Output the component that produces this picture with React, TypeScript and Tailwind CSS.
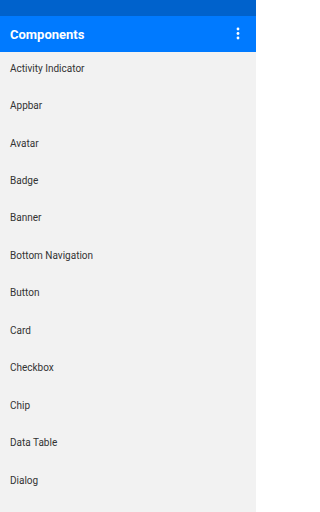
const items = [
  "Activity Indicator",
  "Appbar",
  "Avatar",
  "Badge",
  "Banner",
  "Bottom Navigation",
  "Button",
  "Card",
  "Checkbox",
  "Chip",
  "Data Table",
  "Dialog",
];

function MoreIcon() {
  return (
    <svg width="6" height="14" viewBox="0 0 6 14" fill="white">
      <circle cx="3" cy="2" r="1.4" />
      <circle cx="3" cy="6.5" r="1.4" />
      <circle cx="3" cy="11" r="1.4" />
    </svg>
  );
}

export default function App() {
  return (
    <div className="flex h-[512px] w-[256px] flex-col overflow-hidden bg-[#f2f2f2] font-['Roboto',sans-serif]">
      <div className="h-[16px] shrink-0 bg-[#0062cc]" />
      <div className="flex h-[36px] shrink-0 items-center justify-between bg-[#007aff] pl-[10px] pr-[15px]">
        <span className="text-[13px] font-bold leading-none text-white">Components</span>
        <MoreIcon />
      </div>
      <ul className="flex shrink-0 flex-col">
        {items.map((label) => (
          <li
            key={label}
            className="h-[37.45px] shrink-0 px-[10px] pt-[10.7px] text-[10px] leading-[12px] text-[#333333]"
          >
            {label}
          </li>
        ))}
      </ul>
    </div>
  );
}
